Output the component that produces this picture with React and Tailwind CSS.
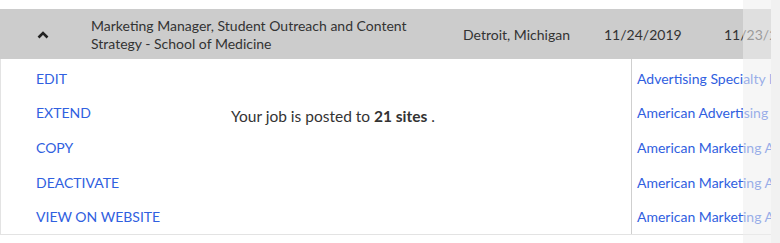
import React from "react";

const actions = ["EDIT", "EXTEND", "COPY", "DEACTIVATE", "VIEW ON WEBSITE"];
const sites = [
  "Advertising Specialty Institute",
  "American Advertising Federation",
  "American Marketing Association",
  "American Marketing Association",
  "American Marketing Association",
];

export default function App() {
  return (
    <div
      className="flex w-[780px] h-[243px] overflow-hidden bg-white text-[#333]"
      style={{ fontFamily: "Lato, 'Open Sans', sans-serif" }}
    >
      <div className="relative w-[771px] h-full overflow-hidden">
        <div className="w-[900px] pt-[9px]">
          {/* header row */}
          <div className="flex items-center h-[50px] bg-[#cccccc] text-[14px] leading-[18px] pt-[1px]">
            <div className="w-[91px] shrink-0 flex justify-center pr-[6px]">
              <svg width="12" height="8" viewBox="0 0 12 8">
                <path d="M1.5 6.5 L6 2 L10.5 6.5" fill="none" stroke="#222" strokeWidth="2.6" />
              </svg>
            </div>
            <div className="w-[372px] shrink-0 pr-[10px]">
              Marketing Manager, Student Outreach and Content Strategy - School of Medicine
            </div>
            <div className="w-[141px] shrink-0">Detroit, Michigan</div>
            <div className="w-[120px] shrink-0">11/24/2019</div>
            <div className="shrink-0">11/23/2019</div>
          </div>
          {/* expanded */}
          <div className="flex w-[771px] h-[176px] border-l border-b border-[#e3e3e3]">
            <div className="w-[230px] shrink-0 flex flex-col pl-[35px] pt-[2px]">
              {actions.map((a) => (
                <div key={a} className="h-[35px] flex items-center text-[14px] text-[#3060e0]">
                  {a}
                </div>
              ))}
            </div>
            <div className="w-[400px] shrink-0 pt-[47px] text-[15.5px] leading-[20px]">
              Your job is posted to <span className="font-bold">21 sites</span> .
            </div>
            <div className="flex-1 min-w-0 overflow-hidden border-l border-[#cfcfcf] pl-[5px] flex flex-col pt-[2px]">
              {sites.map((s, i) => (
                <div key={i} className="h-[35px] flex items-center text-[14px] text-[#3060e0] whitespace-nowrap">
                  {s}
                </div>
              ))}
            </div>
          </div>
        </div>
        <div className="absolute top-0 right-0 w-[28px] h-full bg-[rgba(238,238,238,0.55)]" />
      </div>
      <div className="w-[9px] h-full bg-[#f1f1f1]" />
    </div>
  );
}
